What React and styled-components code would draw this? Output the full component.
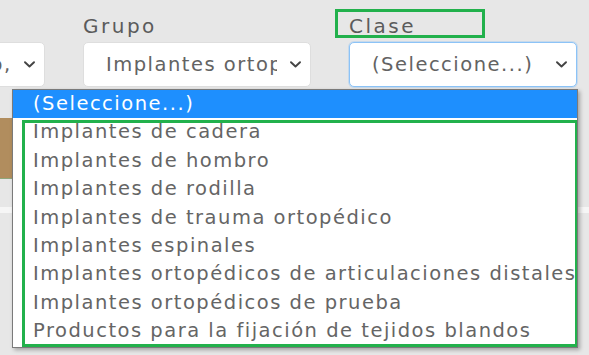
import React from 'react'
import styled, { createGlobalStyle } from 'styled-components'

const GlobalStyle = createGlobalStyle`
  html, body {
    margin: 0;
    padding: 0;
    background: #e7e7e7;
  }
  body {
    font-family: "DejaVu Sans", "Liberation Sans", sans-serif;
  }
`

const options = [
  'Implantes de cadera',
  'Implantes de hombro',
  'Implantes de rodilla',
  'Implantes de trauma ortopédico',
  'Implantes espinales',
  'Implantes ortopédicos de articulaciones distales',
  'Implantes ortopédicos de prueba',
  'Productos para la fijación de tejidos blandos',
]

const Chevron = () => (
  <svg width="11" height="7" viewBox="0 0 11 7">
    <path d="M1 1.2 L5.5 5.5 L10 1.2" fill="none" stroke="#444" strokeWidth="1.9" strokeLinecap="round" strokeLinejoin="round" />
  </svg>
)

const App = () => {
  return (
    <Page>
      <GlobalStyle />
      <FormRow>
        <Field>
          <Label>Segmento</Label>
          <SelectBox>
            <SelectText>Equipo médico, accesorios y suministros</SelectText>
            <Chevron />
          </SelectBox>
        </Field>
        <Field>
          <Label>Grupo</Label>
          <SelectBox>
            <SelectText>Implantes ortopédicos</SelectText>
            <Chevron />
          </SelectBox>
        </Field>
        <Field>
          <Label>
            Clase
            <LabelMark />
          </Label>
          <SelectBox $focused>
            <SelectText>(Seleccione...)</SelectText>
            <Chevron />
          </SelectBox>
        </Field>
      </FormRow>

      <Backdrop>
        <BrownBar />
        <Strip />
      </Backdrop>

      <Dropdown>
        <Option $selected>(Seleccione...)</Option>
        {options.map(o => (
          <Option key={o}>{o}</Option>
        ))}
        <GroupMark />
      </Dropdown>
    </Page>
  )
}

const Page = styled.div`
  position: relative;
  width: 589px;
  height: 355px;
  overflow: hidden;
  background: #e7e7e7;
`

const FormRow = styled.div`
  display: flex;
  gap: 38px;
  margin-left: -183px;
  padding-top: 14px;
`

const Field = styled.div`
  width: 228px;
  display: flex;
  flex-direction: column;
`

const Label = styled.div`
  position: relative;
  font-size: 20px;
  line-height: 24px;
  letter-spacing: 2.5px;
  color: #5b5b5b;
  margin-bottom: 4px;
  white-space: nowrap;
`

const LabelMark = styled.span`
  position: absolute;
  left: -14px;
  top: -5px;
  width: 150px;
  height: 29px;
  box-sizing: border-box;
  border: 3px solid #22b14c;
`

const SelectBox = styled.div`
  height: 45px;
  box-sizing: border-box;
  display: flex;
  align-items: center;
  padding: 0 9px 0 22px;
  background: #fff;
  border: 1px solid ${p => (p.$focused ? '#8cc3f7' : '#dedede')};
  border-radius: 5px;
  box-shadow: ${p => (p.$focused ? '0 0 0 1px rgba(140,195,247,0.35)' : 'none')};
  svg {
    flex: none;
    margin-left: 13px;
  }
`

const SelectText = styled.span`
  flex: 1;
  min-width: 0;
  overflow: hidden;
  white-space: nowrap;
  font-size: 19.5px;
  letter-spacing: 1.5px;
  color: #636363;
`

const Backdrop = styled.div`
  display: flex;
  flex-direction: column;
  margin-top: 31px;
`

const BrownBar = styled.div`
  width: 300px;
  height: 60px;
  background: #b18d5e;
  border-bottom: 1px solid #8fa67a;
`

const Strip = styled.div`
  margin-top: 28px;
  height: 6px;
  background: #f6f6f6;
`

const Dropdown = styled.div`
  position: absolute;
  top: 89px;
  left: 12px;
  width: 566px;
  box-sizing: border-box;
  padding-bottom: 1px;
  background: #fff;
  border: 1px solid #7a7a7a;
  box-shadow: 2px 2px 4px rgba(0, 0, 0, 0.3);
  overflow: hidden;
`

const Option = styled.div`
  height: 28.4px;
  line-height: 28.4px;
  padding-left: 20px;
  white-space: nowrap;
  font-size: 19.5px;
  letter-spacing: 1.5px;
  color: ${p => (p.$selected ? '#fff' : '#656565')};
  background: ${p => (p.$selected ? '#1e8ffe' : 'transparent')};
`

const GroupMark = styled.div`
  position: absolute;
  left: 9px;
  top: 30px;
  width: 556px;
  height: 227px;
  box-sizing: border-box;
  border: 3px solid #22b14c;
  pointer-events: none;
`

export default App
